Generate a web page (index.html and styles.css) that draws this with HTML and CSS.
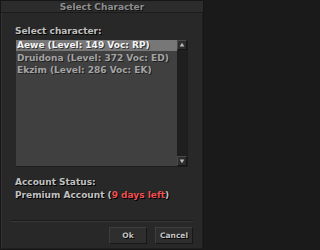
FILE: index.html
```html
<!DOCTYPE html>
<html>
<head>
<meta charset="utf-8">
<link rel="stylesheet" href="styles.css">
</head>
<body>
<div class="window">
  <div class="titlebar">Select Character</div>
  <div class="content">
    <div class="label">Select character:</div>
    <div class="listbox">
      <div class="list">
        <div class="row selected">Aewe (Level: 149 Voc: RP)</div>
        <div class="row">Druidona (Level: 372 Voc: ED)</div>
        <div class="row">Ekzim (Level: 286 Voc: EK)</div>
      </div>
      <div class="scrollbar">
        <div class="arrow">
          <svg width="8" height="8" viewBox="0 0 8 8"><path d="M4 1 L7 6 L1 6 Z" fill="#bdbdbd"/></svg>
        </div>
        <div class="track"></div>
        <div class="arrow">
          <svg width="8" height="8" viewBox="0 0 8 8"><path d="M1 2 L7 2 L4 7 Z" fill="#bdbdbd"/></svg>
        </div>
      </div>
    </div>
    <div class="status">
      <div class="label">Account Status:</div>
      <div class="label">Premium Account (<span class="red">9 days left</span>)</div>
    </div>
    <div class="separator"></div>
    <div class="buttons">
      <div class="button">Ok</div>
      <div class="button">Cancel</div>
    </div>
  </div>
</div>
</body>
</html>
```
FILE: styles.css
```css
html, body {
  margin: 0;
  padding: 0;
  background: #1a1a1a;
}
.window {
  box-sizing: border-box;
  width: 204px;
  height: 250px;
  background: #282828;
  border: 1px solid #161616;
  box-shadow: inset 1px 1px 0 #333333, inset -1px -1px 0 #1e1e1e;
  font-family: "DejaVu Sans", Verdana, sans-serif;
  font-weight: bold;
  font-size: 9px;
  display: flex;
  flex-direction: column;
}
.titlebar {
  height: 11px;
  line-height: 12px;
  text-align: center;
  color: #8f8f8f;
  background: #2c2c2c;
  border-bottom: 1px solid #1b1b1b;
  text-shadow: 1px 1px 0 #111;
}
.content {
  display: flex;
  flex-direction: column;
  padding: 12px 15px 0 14px;
}
.label {
  color: #c0c0c0;
  line-height: 13px;
  text-shadow: 1px 1px 0 #000;
  white-space: nowrap;
}
.listbox {
  margin-top: 2px;
  display: flex;
  height: 126px;
  margin-left: 1px;
  border-right: 1px solid #1c1c1c;
  border-bottom: 1px solid #1c1c1c;
}
.list {
  flex: 1;
  background: #404040;
}
.row {
  height: 12.5px;
  line-height: 10px;
  color: #a4a4a4;
  padding-left: 1px;
  white-space: nowrap;
  text-shadow: 1px 1px 0 #222;
}
.row.selected {
  background: #777777;
  color: #f4f4f4;
  height: 11px;
  margin-bottom: 1.5px;
  text-shadow: 1px 1px 0 #333;
}
.scrollbar {
  width: 10px;
  display: flex;
  flex-direction: column;
  background: #1f1f1f;
}
.arrow {
  width: 10px;
  height: 10px;
  background: #2d2d2d;
  box-sizing: border-box;
  border: 1px solid;
  border-color: #4a4a4a #151515 #151515 #4a4a4a;
  display: flex;
  align-items: center;
  justify-content: center;
}
.arrow svg {
  width: 6px;
  height: 6px;
}
.track {
  flex: 1;
}
.status {
  margin-top: 9px;
}
.red {
  color: #f05050;
}
.separator {
  margin-top: 18px;
  margin-left: -4px;
  margin-right: -5px;
  height: 1px;
  background: #1b1b1b;
  border-bottom: 1px solid #383838;
}
.buttons {
  display: flex;
  justify-content: flex-end;
  gap: 8px;
  margin-top: 5px;
  margin-right: -5px;
}
.button {
  box-sizing: border-box;
  width: 38px;
  height: 17px;
  line-height: 15px;
  text-align: center;
  font-size: 7.5px;
  color: #c4c4c4;
  background: #2e2e2e;
  border: 1px solid;
  border-color: #3e3e3e #171717 #171717 #3e3e3e;
  text-shadow: 1px 1px 0 #000;
}
```
